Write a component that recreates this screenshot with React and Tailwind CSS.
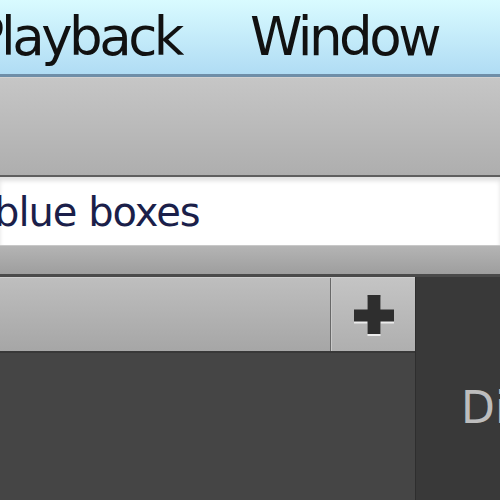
export default function App() {
  return (
    <div className="w-[500px] h-[500px] overflow-hidden flex flex-col bg-[#444444]" style={{ fontFamily: '"DejaVu Sans", sans-serif' }}>
      {/* menu bar */}
      <div className="h-[74px] shrink-0 flex items-center whitespace-nowrap bg-gradient-to-b from-[#d9fbff] to-[#b0dcf4] text-[53px] leading-none text-[#111] tracking-[-3.5px]">
        <div className="w-[181px] shrink-0 flex justify-end">
          <span className="pb-[2px]">Playback</span>
        </div>
        <span className="ml-[69px] pb-[2px]">Window</span>
      </div>
      <div className="h-[3px] shrink-0 bg-[#6f8ea8]" />
      {/* toolbar */}
      <div className="h-[98px] shrink-0 bg-gradient-to-b from-[#c6c6c6] to-[#aeaeae] border-t border-[#d2d2d2]" />
      <div className="h-[2px] shrink-0 bg-[#5f5f5f]" />
      {/* search field */}
      <div className="h-[68px] shrink-0 flex items-center overflow-hidden bg-white shadow-[inset_0_4px_4px_rgba(0,0,0,0.12)] text-[40px] leading-none text-[#1b1f4a] tracking-[-1px] whitespace-nowrap">
        <span className="ml-[-6px] pt-[2px]">blue boxes</span>
      </div>
      <div className="h-[29px] shrink-0 bg-gradient-to-b from-[#b4b4b4] to-[#9e9e9e] border-t border-[#c8c8c8]" />
      <div className="h-[3px] shrink-0 bg-[#4a4a4a]" />
      {/* panels */}
      <div className="flex-1 flex min-h-0">
        <div className="w-[415px] shrink-0 flex flex-col">
          <div className="h-[74px] shrink-0 flex border-t border-[#cfcfcf]">
            <div className="w-[330px] shrink-0 bg-gradient-to-b from-[#bebebe] to-[#a6a6a6]" />
            <div className="w-[1px] shrink-0 bg-[#686868]" />
            <div className="w-[1px] shrink-0 bg-[#c9c9c9]" />
            <div className="flex-1 flex items-center justify-center bg-gradient-to-b from-[#c4c4c4] to-[#afafaf] pt-[2px]">
              <svg width="42" height="44" viewBox="0 0 42 44">
                <path d="M14.5 1h13v14.5h13.5v12H27.5V40h-13V27.5H1v-12h13.5z" fill="#ececec" transform="translate(0 2)" />
                <path d="M14.5 1h13v14.5h13.5v12H27.5V40h-13V27.5H1v-12h13.5z" fill="#2e2e2e" />
              </svg>
            </div>
          </div>
          <div className="h-[2px] shrink-0 bg-[#383838]" />
          <div className="flex-1 bg-[#454545]" />
        </div>
        <div className="flex-1 min-w-0 overflow-hidden bg-[#393939] border-l border-[#2e2e2e] pt-[109px] pl-[45px] text-[44px] leading-none text-[#bdbdbd] whitespace-nowrap">
          Display
        </div>
      </div>
    </div>
  );
}
